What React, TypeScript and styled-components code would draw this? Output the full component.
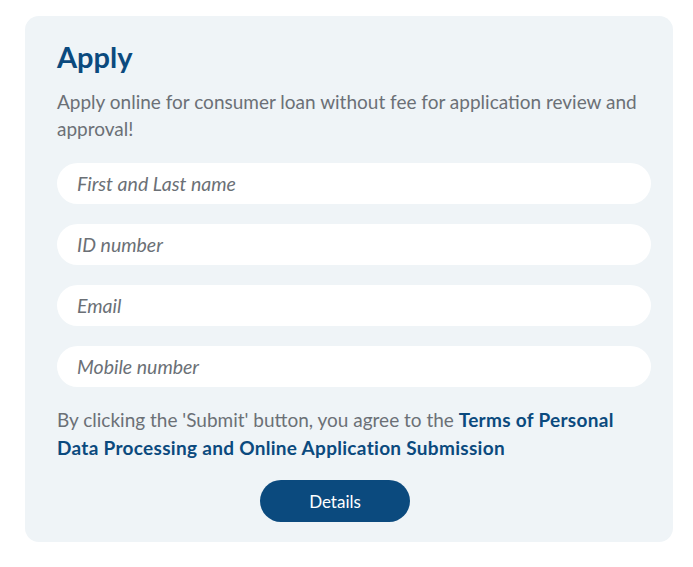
import React from 'react';
import styled, { createGlobalStyle } from 'styled-components';

const GlobalStyle = createGlobalStyle`
  html, body {
    margin: 0;
    padding: 0;
    background: #ffffff;
  }

  body {
    font-family: Lato, 'Noto Sans', sans-serif;
  }
`;

const Page = styled.main`
  padding: 16px 20px 24px 25px;
`;

const Card = styled.section`
  width: 648px;
  box-sizing: border-box;
  background: #eff4f7;
  border-radius: 14px;
  padding: 22px 22px 20px 32px;
  display: flex;
  flex-direction: column;
`;

const Title = styled.h2`
  margin: 0;
  font-size: 29px;
  line-height: 38px;
  font-weight: 700;
  color: #0b4a7e;
`;

const Lead = styled.p`
  margin: 12px 0 0;
  font-size: 19px;
  line-height: 27px;
  color: #6b7076;
`;

const Fields = styled.div`
  margin-top: 21px;
  display: flex;
  flex-direction: column;
  gap: 20px;
`;

const Field = styled.input`
  height: 41px;
  box-sizing: border-box;
  border: none;
  border-radius: 21px;
  background: #ffffff;
  padding: 0 20px;
  font-family: inherit;
  font-size: 19.5px;
  color: #333;
  outline: none;

  &::placeholder {
    color: #6b7076;
    font-style: italic;
  }
`;

const Consent = styled.p`
  margin: 19px 0 0;
  max-width: 570px;
  font-size: 19px;
  line-height: 28px;
  color: #6b7076;
`;

const TermsLink = styled.a`
  color: #0b4a7e;
  font-weight: 700;
  letter-spacing: 0.3px;
  text-decoration: none;
`;

const Actions = styled.div`
  margin-top: 18px;
  display: flex;
  justify-content: center;
  padding-right: 38px;
`;

const SubmitButton = styled.button`
  width: 150px;
  height: 42px;
  border: none;
  border-radius: 21px;
  background: #0b4a7e;
  color: #ffffff;
  font-family: inherit;
  font-size: 17px;
  cursor: pointer;
`;

const fields = ['First and Last name', 'ID number', 'Email', 'Mobile number'];

export default function App() {
  return (
    <Page>
      <GlobalStyle />
      <Card>
        <Title>Apply</Title>
        <Lead>
          Apply online for consumer loan without fee for application review and approval!
        </Lead>
        <Fields>
          {fields.map((label) => (
            <Field key={label} placeholder={label} aria-label={label} />
          ))}
        </Fields>
        <Consent>
          By clicking the 'Submit' button, you agree to the{' '}
          <TermsLink href="#">
            Terms of Personal Data Processing and Online Application Submission
          </TermsLink>
        </Consent>
        <Actions>
          <SubmitButton type="submit">Details</SubmitButton>
        </Actions>
      </Card>
    </Page>
  );
}
